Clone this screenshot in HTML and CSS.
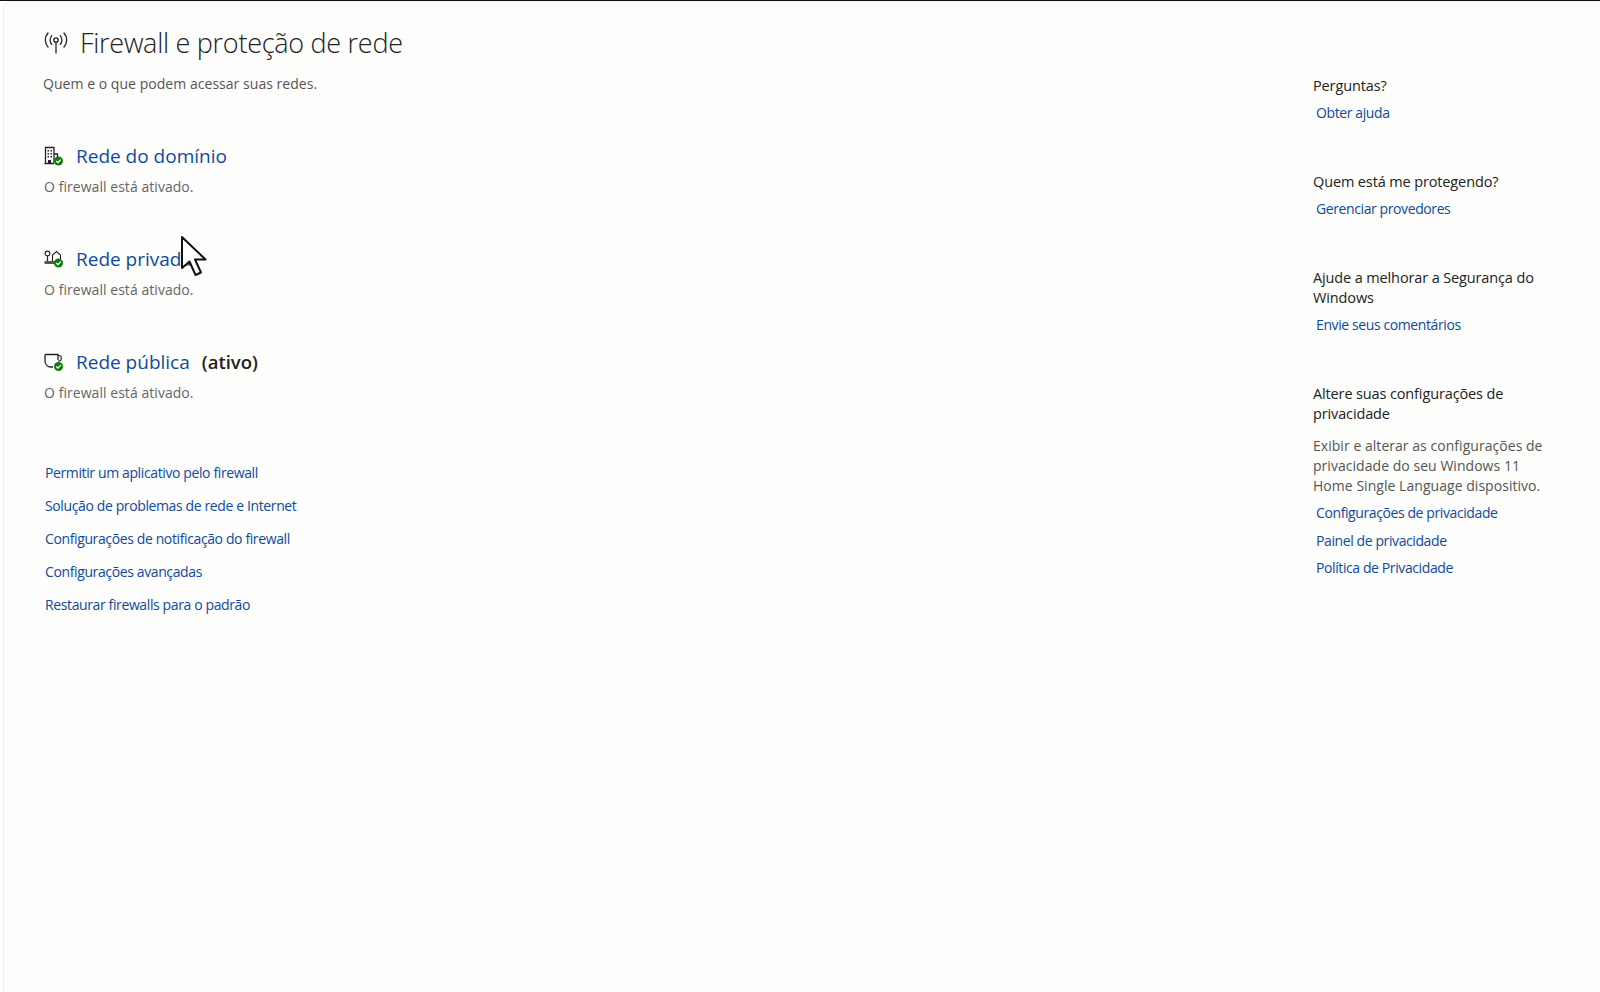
FILE: index.html
```html
<!DOCTYPE html>
<html lang="pt-BR">
<head>
    <meta charset="UTF-8">
    <title>Firewall e proteção de rede</title>
    <link rel="stylesheet" href="styles.css">
</head>
<body>
    <div class="window">
        <main class="content">
            <div class="page-title">
                <svg class="title-icon" width="26" height="24" viewBox="0 0 26 24" fill="none" stroke="#222" stroke-width="1.3" stroke-linecap="round">
                    <circle cx="13" cy="9" r="2.2"/>
                    <path d="M13 11.2V22"/>
                    <path d="M8.8 4.6a6.5 6.5 0 0 0 0 8.8"/>
                    <path d="M17.2 4.6a6.5 6.5 0 0 1 0 8.8"/>
                    <path d="M5 2a10.5 10.5 0 0 0 0 14"/>
                    <path d="M21 2a10.5 10.5 0 0 1 0 14"/>
                </svg>
                <h1>Firewall e proteção de rede</h1>
            </div>
            <p class="subtitle">Quem e o que podem acessar suas redes.</p>

            <section class="network">
                <div class="network-head">
                    <svg class="net-icon" width="20" height="20" viewBox="0 0 20 20">
                        <path d="M1.5 17.5V1.5H10V17.5M10 8H13.5V12M0.5 17.5H10" fill="none" stroke="#222" stroke-width="1.3"/>
                        <path d="M3.5 4h1.5v1.5H3.500zM6.500 4h1.500v1.500H6.500zM3.500 7h1.500v1.500H3.500zM6.500 7h1.500v1.500H6.500zM3.500 10h1.500v1.500H3.500zM6.500 10h1.500v1.500H6.500zM4 14h3v3H4z" fill="#222"/>
                        <circle cx="14.500" cy="15" r="4.500" fill="#107c10"/>
                        <path d="M12.300 15l1.600 1.600 2.900-3" fill="none" stroke="#fff" stroke-width="1.300"/>
                    </svg>
                    <a class="net-link" href="#">Rede do domínio</a>
                </div>
                <p class="net-status">O firewall está ativado.</p>
            </section>

            <section class="network">
                <div class="network-head">
                    <svg class="net-icon" width="20" height="20" viewBox="0 0 20 20">
                        <circle cx="3.500" cy="4.500" r="2.400" fill="none" stroke="#222" stroke-width="1.100"/>
                        <path d="M3.500 6.900V12" stroke="#222" stroke-width="1.200"/>
                        <path d="M8.500 12V6L12.500 2.500L16.500 6V10" fill="none" stroke="#222" stroke-width="1.100"/>
                        <path d="M0.500 12h11v3h-11z" fill="#555"/>
                        <circle cx="14.500" cy="14" r="4.500" fill="#107c10"/>
                        <path d="M12.300 14l1.600 1.600 2.900-3" fill="none" stroke="#fff" stroke-width="1.300"/>
                    </svg>
                    <a class="net-link" href="#">Rede privada</a>
                </div>
                <p class="net-status">O firewall está ativado.</p>
            </section>

            <section class="network">
                <div class="network-head">
                    <svg class="net-icon" width="20" height="20" viewBox="0 0 20 20">
                        <path d="M1 2.500H14V8M1 2.500V8.500C1 12.500 3.500 15 7 15H9" fill="none" stroke="#222" stroke-width="1.300"/>
                        <path d="M14 3.500h1.200c2.800 0 2.800 5.500 0 5.500h-1.200" fill="none" stroke="#222" stroke-width="1.100"/>
                        <circle cx="14.500" cy="14.500" r="4.500" fill="#107c10"/>
                        <path d="M12.300 14.500l1.600 1.600 2.900-3" fill="none" stroke="#fff" stroke-width="1.300"/>
                    </svg>
                    <a class="net-link" href="#">Rede pública</a>
                    <span class="net-active">(ativo)</span>
                </div>
                <p class="net-status">O firewall está ativado.</p>
            </section>

            <nav class="actions">
                <a href="#">Permitir um aplicativo pelo firewall</a>
                <a href="#">Solução de problemas de rede e Internet</a>
                <a href="#">Configurações de notificação do firewall</a>
                <a href="#">Configurações avançadas</a>
                <a href="#">Restaurar firewalls para o padrão</a>
            </nav>
        </main>

        <aside class="sidebar">
            <div class="side-group">
                <h2>Perguntas?</h2>
                <a href="#">Obter ajuda</a>
            </div>
            <div class="side-group">
                <h2>Quem está me protegendo?</h2>
                <a href="#">Gerenciar provedores</a>
            </div>
            <div class="side-group">
                <h2>Ajude a melhorar a Segurança do Windows</h2>
                <a href="#">Envie seus comentários</a>
            </div>
            <div class="side-group">
                <h2>Altere suas configurações de privacidade</h2>
                <p>Exibir e alterar as configurações de privacidade do seu Windows 11 Home Single Language dispositivo.</p>
                <a href="#">Configurações de privacidade</a>
                <a href="#">Painel de privacidade</a>
                <a href="#">Política de Privacidade</a>
            </div>
        </aside>

        <!-- mouse pointer caught in the capture -->
        <svg class="pointer" width="28" height="42" viewBox="0 0 28 42">
            <path d="M2 2V33L9.500 26.500L15.500 40L21 37.500L15 24.500H25.500Z" fill="#fff" stroke="#111" stroke-width="2" stroke-linejoin="round"/>
        </svg>
    </div>
</body>
</html>
```

FILE: styles.css
```css
* {
    box-sizing: border-box;
}

html, body {
    height: 100%;
}

body {
    margin: 0;
    background: #fff;
    border-top: 1px solid #111;
    font-family: "Open Sans", "Noto Sans", sans-serif;
    font-size: 14px;
    color: #222;
    overflow: hidden;
}

a {
    color: #0f4a9e;
    text-decoration: none;
}

.window {
    position: relative;
    display: flex;
    justify-content: space-between;
    height: 100%;
    margin-left: 3px;
    background: #fdfdfc;
    border-left: 1px solid #eeeeec;
    border-top: 1px solid #f2f2f0;
    border-top-left-radius: 8px;
}

.content {
    padding: 22px 0 0 39px;
}

.page-title {
    display: flex;
    align-items: center;
    gap: 11px;
}

.title-icon {
    flex: none;
}

h1 {
    margin: 0;
    font-size: 27px;
    font-weight: 300;
    line-height: 38px;
    letter-spacing: -0.28px;
    color: #222;
}

.subtitle {
    margin: 12px 0 0;
    line-height: 20px;
    color: #555;
    letter-spacing: 0.04px;
}

.network {
    margin-top: 47px;
    padding-left: 1px;
}

.network + .network {
    margin-top: 47px;
}

.network-head {
    display: flex;
    align-items: center;
    height: 30px;
}

.net-icon {
    flex: none;
    margin-right: 12px;
}

.net-link {
    font-size: 19px;
}

.net-active {
    margin-left: 12px;
    padding-bottom: 2px;
    font-size: 18.500px;
    font-weight: 600;
    color: #222;
}

.net-status {
    margin: 6px 0 0;
    line-height: 20px;
    color: #666;
    letter-spacing: 0.05px;
}

.actions {
    display: flex;
    flex-direction: column;
    align-items: flex-start;
    gap: 13px;
    margin-top: 60px;
    padding-left: 2px;
}

.actions a {
    line-height: 20px;
    letter-spacing: -0.38px;
}

.sidebar {
    width: 287px;
    padding: 74px 44px 0 0;
}

.side-group {
    margin-bottom: 49px;
}

.side-group h2 {
    margin: 0;
    font-size: 14.500px;
    font-weight: 400;
    line-height: 20px;
    letter-spacing: -0.13px;
    color: #222;
}

.side-group p {
    margin: 12px 0 0;
    line-height: 20px;
    letter-spacing: 0.04px;
    color: #555;
}

.side-group a {
    display: block;
    margin: 7px 0 0 3px;
    line-height: 20px;
    letter-spacing: -0.4px;
}

.side-group a + a {
    margin-top: 7.600px;
}

.pointer {
    position: absolute;
    left: 176px;
    top: 233px;
}
```
